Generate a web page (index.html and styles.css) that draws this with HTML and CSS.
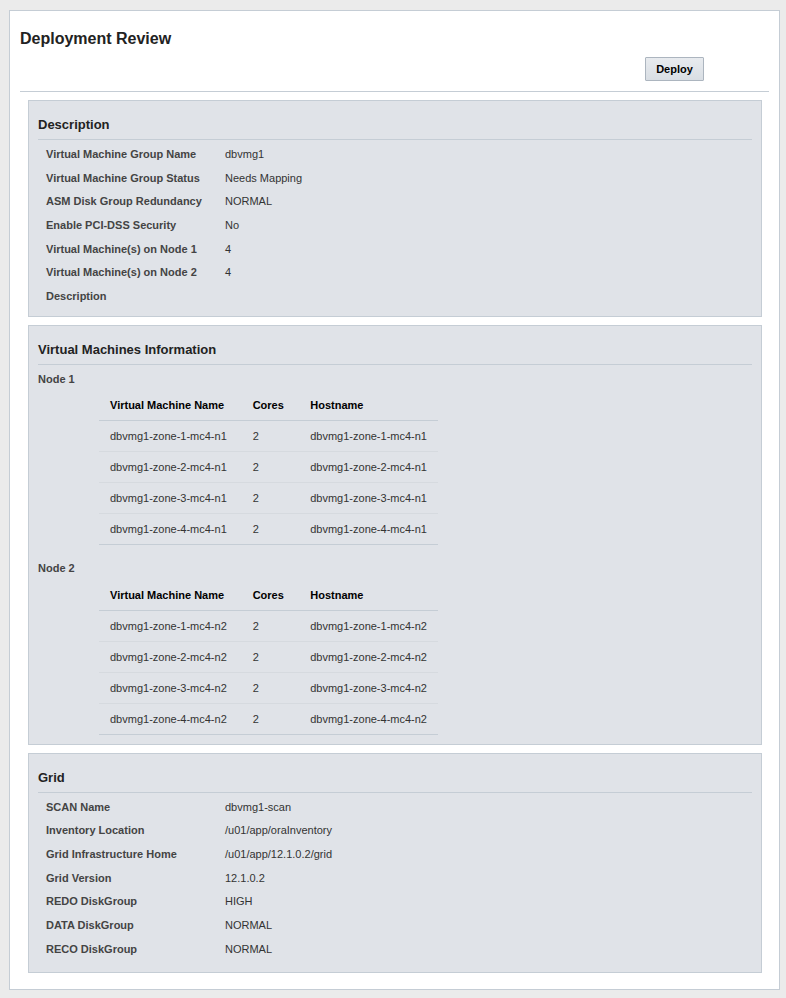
FILE: index.html
```html
<!DOCTYPE html>
<html lang="en">
  <head>
    <meta charset="UTF-8" />
    <meta name="viewport" content="width=device-width, initial-scale=1.0" />
    <title>Deployment Review</title>
    <link rel="stylesheet" href="styles.css">
  </head>
  <body>
    <div class="panel">
      <h1 class="page-title">Deployment Review</h1>
      <div class="toolbar">
        <button class="btn">Deploy</button>
      </div>

      <!-- Description -->
      <section class="box">
        <h2 class="box-title">Description</h2>
        <table class="props">
          <tr><th>Virtual Machine Group Name</th><td>dbvmg1</td></tr>
          <tr><th>Virtual Machine Group Status</th><td>Needs Mapping</td></tr>
          <tr><th>ASM Disk Group Redundancy</th><td>NORMAL</td></tr>
          <tr><th>Enable PCI-DSS Security</th><td>No</td></tr>
          <tr><th>Virtual Machine(s) on Node 1</th><td>4</td></tr>
          <tr><th>Virtual Machine(s) on Node 2</th><td>4</td></tr>
          <tr><th>Description</th><td></td></tr>
        </table>
      </section>

      <!-- Virtual machines -->
      <section class="box vm-box">
        <h2 class="box-title">Virtual Machines Information</h2>

        <div class="node-label">Node 1</div>
        <table class="vm-table">
          <thead>
            <tr><th class="col-name">Virtual Machine Name</th><th class="col-cores">Cores</th><th>Hostname</th></tr>
          </thead>
          <tbody>
            <tr><td>dbvmg1-zone-1-mc4-n1</td><td>2</td><td>dbvmg1-zone-1-mc4-n1</td></tr>
            <tr><td>dbvmg1-zone-2-mc4-n1</td><td>2</td><td>dbvmg1-zone-2-mc4-n1</td></tr>
            <tr><td>dbvmg1-zone-3-mc4-n1</td><td>2</td><td>dbvmg1-zone-3-mc4-n1</td></tr>
            <tr><td>dbvmg1-zone-4-mc4-n1</td><td>2</td><td>dbvmg1-zone-4-mc4-n1</td></tr>
          </tbody>
        </table>

        <div class="node-label node-gap">Node 2</div>
        <table class="vm-table">
          <thead>
            <tr><th class="col-name">Virtual Machine Name</th><th class="col-cores">Cores</th><th>Hostname</th></tr>
          </thead>
          <tbody>
            <tr><td>dbvmg1-zone-1-mc4-n2</td><td>2</td><td>dbvmg1-zone-1-mc4-n2</td></tr>
            <tr><td>dbvmg1-zone-2-mc4-n2</td><td>2</td><td>dbvmg1-zone-2-mc4-n2</td></tr>
            <tr><td>dbvmg1-zone-3-mc4-n2</td><td>2</td><td>dbvmg1-zone-3-mc4-n2</td></tr>
            <tr><td>dbvmg1-zone-4-mc4-n2</td><td>2</td><td>dbvmg1-zone-4-mc4-n2</td></tr>
          </tbody>
        </table>
      </section>

      <!-- Grid -->
      <section class="box grid-box">
        <h2 class="box-title">Grid</h2>
        <table class="props">
          <tr><th>SCAN Name</th><td>dbvmg1-scan</td></tr>
          <tr><th>Inventory Location</th><td>/u01/app/oraInventory</td></tr>
          <tr><th>Grid Infrastructure Home</th><td>/u01/app/12.1.0.2/grid</td></tr>
          <tr><th>Grid Version</th><td>12.1.0.2</td></tr>
          <tr><th>REDO DiskGroup</th><td>HIGH</td></tr>
          <tr><th>DATA DiskGroup</th><td>NORMAL</td></tr>
          <tr><th>RECO DiskGroup</th><td>NORMAL</td></tr>
        </table>
      </section>
    </div>
  </body>
</html>
```

FILE: styles.css
```css
:root {
  --page-bg: #ebebeb;
  --line: #c5cdd5;
  --box-bg: #e0e3e8;
  --label: #444;
  --text: #333;
}

* {
  margin: 0;
  padding: 0;
  box-sizing: border-box;
}

body {
  background: var(--page-bg);
  font-family: "Liberation Sans", Arial, sans-serif;
  font-size: 11px;
  color: var(--text);
  padding: 10px 6px 8px 9px;
}

/* Main panel */
.panel {
  background: #fff;
  border: 1px solid var(--line);
  padding: 0 10px 16px;
}

.page-title {
  font-size: 16px;
  font-weight: bold;
  color: #222;
  line-height: 20px;
  padding-top: 18px;
}

.toolbar {
  display: flex;
  justify-content: flex-end;
  padding: 8px 65px 10px 0;
  border-bottom: 1px solid var(--line);
  margin-bottom: 8px;
}

.btn {
  width: 59px;
  height: 24px;
  font-family: inherit;
  font-size: 11px;
  font-weight: bold;
  color: #000;
  background: linear-gradient(#e8ebef, #d9dee4);
  border: 1px solid #acb5bf;
  border-radius: 1px;
  cursor: pointer;
}

/* Section boxes */
.box {
  background: var(--box-bg);
  border: 1px solid var(--line);
  margin: 0 7px 8px 8px;
  padding: 15px 9px 8px;
}

.box:last-child {
  margin-bottom: 0;
}

.box-title {
  font-size: 13px;
  font-weight: bold;
  color: #222;
  line-height: 18px;
  padding-bottom: 5px;
  border-bottom: 1px solid var(--line);
  margin-bottom: 2px;
}

/* Label / value rows */
.props {
  border-collapse: collapse;
  margin-left: 8px;
}

.props th,
.props td {
  height: 23.7px;
  text-align: left;
  vertical-align: middle;
  white-space: nowrap;
}

.props th {
  width: 179px;
  font-weight: bold;
  color: var(--label);
}

.props td {
  color: var(--text);
}

.grid-box {
  padding-bottom: 11px;
}

/* VM tables */
.vm-box {
  padding-bottom: 9px;
}

.node-label {
  font-weight: bold;
  color: var(--label);
  line-height: 16px;
  margin-top: 6px;
  margin-bottom: 3px;
}

.node-gap {
  margin-top: 15px;
}

.vm-table {
  border-collapse: collapse;
  margin-left: 61px;
  width: 339px;
  border-bottom: 1px solid var(--line);
}

.vm-table th,
.vm-table td {
  text-align: left;
  padding: 0 11px;
  height: 31px;
  white-space: nowrap;
}

.vm-table th {
  font-weight: bold;
  color: #000;
  border-bottom: 1px solid var(--line);
}

.vm-table td {
  color: var(--text);
  border-top: 1px solid #d6dadf;
}

.vm-table tbody tr:first-child td {
  border-top: none;
}

.col-name {
  width: 143px;
}

.col-cores {
  width: 58px;
}
```
